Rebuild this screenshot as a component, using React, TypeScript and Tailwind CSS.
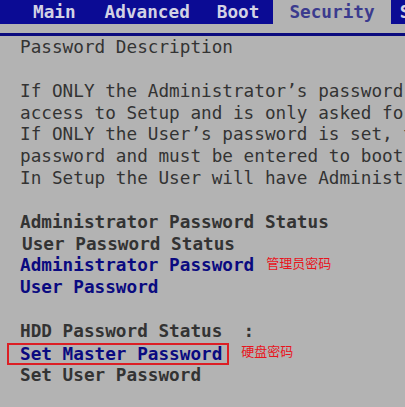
const mono = "font-['DejaVu_Sans_Mono',_'Liberation_Mono',_monospace]";
const cjk = "font-['Noto_Sans_CJK_SC',_sans-serif]";

const description = [
  "If ONLY the Administrator\u2019s password is set, then this only limits",
  "access to Setup and is only asked for when entering Setup.",
  "If ONLY the User\u2019s password is set, then this is a power on",
  "password and must be entered to boot or enter Setup.",
  "In Setup the User will have Administrator rights.",
];

function Line({ children, className = "" }: { children?: React.ReactNode; className?: string }) {
  return <div className={`h-[21.85px] leading-[21.85px] whitespace-pre ${className}`}>{children}</div>;
}

export default function App() {
  return (
    <div className={`w-[405px] h-[407px] overflow-hidden bg-[#b3b3b3] ${mono} text-[17.7px]`}>
      {/* Tab bar */}
      <div className="flex h-[24px] bg-[#0b0b94] font-bold text-[#d2d2e4] leading-[24px] whitespace-pre">
        <span className="ml-[33px]">Main</span>
        <span className="ml-[29px]">Advanced</span>
        <span className="ml-[27px]">Boot</span>
        <span className="ml-[14px] px-[16px] bg-[#b3b3b3] text-[#3b3b8e]">Security</span>
        <span className="ml-[9px]">Save</span>
      </div>
      <div className="h-[9px]" />
      <div className="h-[3px] bg-[#0b0b7e]" />

      {/* Content */}
      <div className="pl-[20px] pt-[1px] text-[#333333]">
        <Line>Password Description</Line>
        <Line />
        {description.map((t) => (
          <Line key={t}>{t}</Line>
        ))}
        <Line />
        <Line className="font-bold">Administrator Password Status</Line>
        <Line className="font-bold pl-[2px]">User Password Status</Line>
        <Line className="flex items-center">
          <span className="font-bold text-[#0a0a80]">Administrator Password</span>
          <span className={`ml-[12px] -mt-[8px] text-[13px] leading-none text-[#e8141c] ${cjk}`}>管理员密码</span>
        </Line>
        <Line className="font-bold text-[#0a0a80]">User Password</Line>
        <Line />
        <Line className="font-bold">HDD Password Status  :</Line>
        <div className="flex items-center -ml-[13px] h-[21.85px]">
          <div className="h-[22px] border-2 border-[#dc1e24] pl-[11px] pr-[5px] leading-[18px] font-bold text-[#0a0a80] whitespace-pre">
            Set Master Password
          </div>
          <span className={`ml-[12px] -mt-[6px] text-[13px] leading-none text-[#e8141c] ${cjk}`}>硬盘密码</span>
        </div>
        <Line className="font-bold">Set User Password</Line>
      </div>
    </div>
  );
}
